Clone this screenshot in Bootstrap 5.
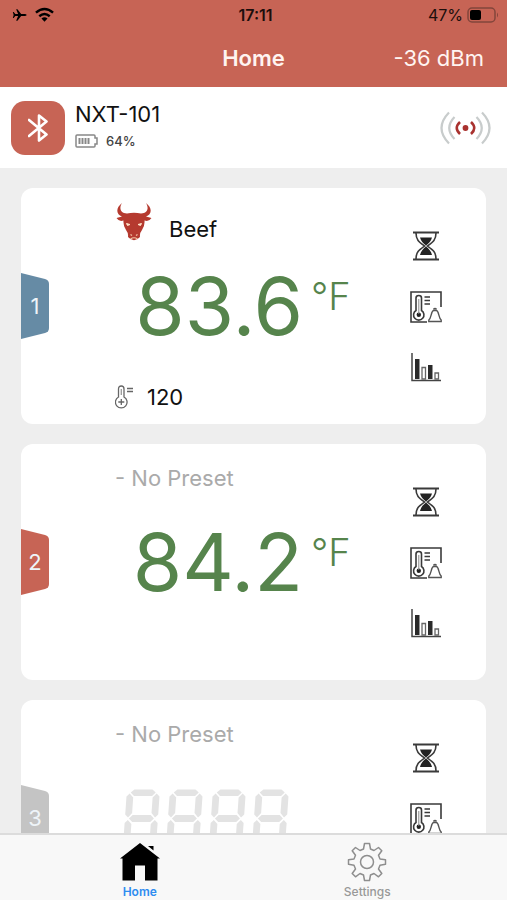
<!DOCTYPE html>
<html lang="en">
<head>
<meta charset="utf-8">
<meta name="viewport" content="width=device-width, initial-scale=1">
<title>Home</title>
<link href="https://cdn.jsdelivr.net/npm/bootstrap@5.3.0/dist/css/bootstrap.min.css" rel="stylesheet">
<style>
  :root { --brick: #c76455; --steel: #668ba5; --leaf: #56844c; }
  body { font-family: Inter, "Liberation Sans", sans-serif; color: #111; background: #eee; }
  svg { display: block; flex: none; }
  .top-area { background: var(--brick); }
  .status-line { height: 30px; font-size: 16px; line-height: 30px; color: #1c0e0c; }
  .title-line { height: 57px; padding: 0 23px; font-size: 22px; line-height: 56px; color: #fff4f1; }
  .title-line h1 { font-size: 22px; line-height: 56px; }
  .device-line { height: 81px; padding: 0 16px 0 11px; }
  .bt-tile { width: 54px; height: 54px; border-radius: 14px; background: var(--brick); }
  .device-text { padding: 0 0 2px 10px; }
  .device-name { font-size: 22px; line-height: 28px; }
  .device-level { font-size: 13px; line-height: 26px; font-weight: 500; color: #444; }
  .probe-scroll { scrollbar-width: none; padding: 20px 21px; min-height: 0; }
  .probe-scroll::-webkit-scrollbar { display: none; }
  .probe-list { gap: 20px; }
  .probe { height: 236px; border-radius: 12px; overflow: hidden; }
  .probe-tag { width: 28px; height: 66px; font-size: 22px; line-height: 66px; color: #eef4f8; clip-path: path("M0 0L24 6Q28 7 28 11V55Q28 59 24 60L0 66Z"); }
  .tag-steel { background: var(--steel); }
  .tag-brick { background: var(--brick); }
  .tag-grey { background: #c4c4c4; }
  .probe-body { padding: 12px 0 11px 66px; }
  .preset-line { height: 44px; gap: 16px; font-size: 22px; line-height: 28px; }
  .preset-line h2 { font-size: 22px; line-height: 30px; }
  .no-preset { color: #aaa; }
  .reading { margin-top: 22px; gap: 8px; color: var(--leaf); }
  .reading-value { font-size: 80px; line-height: 80px; width: 188px; }
  .reading-unit { font-size: 38px; line-height: 60px; font-weight: 300; }
  .reading-blank { margin-top: 33px; gap: 5px; padding-left: 8px; }
  .target-line { height: 32px; gap: 14px; font-size: 22px; }
  .probe-tools { width: 120px; gap: 30px; }
  .tab-line { height: 67px; background: #f8f8f8; border-top: 2px solid #dcdcdc; padding: 0 26px; }
  .tab-line a { gap: 2px; font-size: 12px; line-height: 16px; font-weight: 500; color: #999; padding-top: 7px; }
  .tab-line a.active { color: #2f8cf0; font-weight: 600; }
</style>
</head>
<body>
<svg width="0" height="0" class="position-absolute" aria-hidden="true">
  <defs>
    <symbol id="hourglass" viewBox="0 0 26 30">
      <g fill="none" stroke="#3a3a3a" stroke-width="1.6"><path d="M0 1.500H26M0 28.500H26" stroke-width="2"/><path d="M3 2C3 9 6 11 11.500 15C6 19 3 21 3 28M23 2C23 9 20 11 14.500 15C20 19 23 21 23 28"/></g>
      <path d="M7 6.500H19C18 10 16 12 13 14.500C10 12 8 10 7 6.500ZM13 15.500C16 18 18 20 19 24H7C8 20 10 18 13 15.500Z" fill="#222"/>
    </symbol>
    <symbol id="thermo-alarm" viewBox="0 0 32 32">
      <g fill="none" stroke="#3a3a3a" stroke-width="1.6"><path d="M31 16V1H1V31H17"/><path d="M6 19.500V7Q6 4.500 8.800 4.500Q11.500 4.500 11.500 7V19.500A5.200 5.200 0 1 1 6 19.500Z"/><path d="M14.500 6H20M14.500 9.500H20M14.500 13H20"/><path d="M18.800 30.500V29C21.500 27 21 20 23.500 19.500H26.500C29 20 28.500 27 31.200 29V30.500Z" stroke="#555" stroke-width="1.400"/><path d="M23.500 18.500Q25 16.500 26.500 18.500" stroke="#555" stroke-width="1.600"/></g>
      <circle cx="8.800" cy="23.800" r="2.200" fill="#222"/><path d="M8.800 8V23" stroke="#888"/>
    </symbol>
    <symbol id="bars" viewBox="0 0 31 29">
      <path d="M1 0V27.500H30" fill="none" stroke="#444" stroke-width="1.500"/>
      <path d="M4 6H8.500V26H4ZM17 12H21.500V26H17Z" fill="#2a2a2a"/>
      <path d="M11 14.500H14.500V26H11ZM24 20H27.500V26H24Z" fill="none" stroke="#666" stroke-width="1.300"/>
    </symbol>
    <symbol id="lcd-digit" viewBox="0 0 38 60">
      <g fill="#e3e3e3" transform="translate(4 0) skewX(-4)">
        <path d="M4 3.500L7.500 0.500H25.500L29 3.500L25.500 7H7.500ZM4 29.500L7.500 26H25.500L29 29.500L25.500 33H7.500ZM4 55.500L7.500 52H25.500L29 55.500L25.500 59H7.500Z"/>
        <path d="M3 4.500L6.800 8.500V24L3 28.500L0 25.500V7.500ZM30 4.500L33 7.500V25.500L30 28.500L26.200 24V8.500ZM3 31L6.800 35V50L3 54.500L0 51V34ZM30 31L33 34V51L30 54.500L26.200 50V35Z"/>
      </g>
    </symbol>
  </defs>
</svg>

<div class="d-flex flex-column vh-100">
  <header class="top-area flex-shrink-0">
    <div class="status-line d-flex px-2">
      <div class="col d-flex align-items-center gap-2 ps-1">
        <svg width="15" height="16" viewBox="0 0 18 16"><path d="M17.500 8C17.500 7 16 6.700 14.500 6.700H11L6.500 1H5L7.300 6.700H4L2 4.500H1L2 8L1 11.500H2L4 9.300H7.300L5 15H6.500L11 9.300H14.500C16 9.300 17.500 9 17.500 8Z"/></svg>
        <svg width="19" height="16" viewBox="0 0 20 16"><g fill="none" stroke="#000" stroke-width="2.600"><path d="M1 5.500Q10-2 19 5.500"/><path d="M4.500 9.300Q10 4.700 15.500 9.300"/></g><path d="M10 15L6.800 11.800Q10 9 13.200 11.800Z"/></svg>
      </div>
      <div class="fw-semibold">17:11</div>
      <div class="col d-flex align-items-center justify-content-end gap-1">
        <span>47%</span>
        <svg width="32" height="16" viewBox="0 0 32 16"><rect x="1" y="1" width="27" height="14" rx="4" fill="none" stroke="#83453b" stroke-width="1.500"/><rect x="3" y="3" width="11" height="10" rx="2"/><path d="M30 5.500Q32 8 30 10.500Z" fill="#83453b"/></svg>
      </div>
    </div>
    <div class="title-line d-flex">
      <div class="col"></div>
      <h1 class="m-0 fw-semibold">Home</h1>
      <div class="col text-end">-36 dBm</div>
    </div>
  </header>

  <section class="device-line bg-white d-flex align-items-center flex-shrink-0">
    <div class="bt-tile d-flex align-items-center justify-content-center">
      <svg width="20" height="28" viewBox="0 0 20 28"><path d="M1 6L18.500 20.500L11 26.500V1.500L18.500 7.500L1 22" fill="none" stroke="#fff" stroke-width="2.600" stroke-linejoin="round" stroke-linecap="round"/></svg>
    </div>
    <div class="device-text flex-grow-1">
      <div class="device-name">NXT-101</div>
      <div class="device-level d-flex align-items-center gap-2">
        <svg width="23" height="14" viewBox="0 0 23 14"><path d="M2 1H19Q20 1 20 2V4H22V10H20V12Q20 13 19 13H2Q1 13 1 12V2Q1 1 2 1Z" fill="none" stroke="#888" stroke-width="1.500"/><path d="M4.500 4V10M7.500 4V10M10.500 4V10M13.500 4V10" stroke="#888" stroke-width="2"/></svg>
        <span>64%</span>
      </div>
    </div>
    <svg width="51" height="34" viewBox="0 0 51 34"><g fill="none" stroke="#c8cccc" stroke-width="2.200"><path d="M9 1.500Q-6 17 9 32.500M42 1.500Q57 17 42 32.500"/><path d="M14.500 6Q4 17 14.500 28M36.500 6Q47 17 36.500 28"/></g><path d="M20 11Q13.500 17 20 23M31 11Q37.500 17 31 23" fill="none" stroke="#a9322f" stroke-width="2.600"/><circle cx="25.500" cy="17" r="2.900" fill="#a9322f"/></svg>
  </section>

  <main class="probe-scroll flex-grow-1 overflow-auto">
    <div class="probe-list d-flex flex-column">
      <article class="probe bg-white d-flex flex-shrink-0">
        <div class="probe-tag tag-steel align-self-center text-center">1</div>
        <div class="probe-body flex-grow-1 d-flex flex-column">
          <div class="preset-line d-flex align-items-end">
            <svg class="align-self-center" width="38" height="38" viewBox="0 0 36 38"><path d="M6 0C3 5 4 10 11 10.500Q18 9 25 10.500C32 10 33 5 30 0C36.500 5 36 11.500 30 13.500L35.500 15Q33 19 28.500 17.500Q29 23 26 27Q23.500 30 24 34Q18 40.500 12 34Q12.500 30 10 27Q7 23 7.500 17.500Q3 19 .5 15L6 13.500C0 11.500-.5 5 6 0Z" fill="#b53a2f"/><path d="M10.500 20.500L14 21.500L11.500 22.500ZM25.500 20.500L22 21.500L24.500 22.500Z" fill="#ffe3c8" stroke="#ffe3c8"/><path d="M14.500 31.500L16 32.500M21.500 31.500L20 32.500M14.500 36Q18 33.500 21.500 36" fill="none" stroke="#f2c6a5" stroke-width="1.200"/></svg>
            <h2 class="m-0 fw-normal">Beef</h2>
          </div>
          <div class="reading d-flex">
            <div class="reading-value text-end">83.6</div>
            <div class="reading-unit">°F</div>
          </div>
          <div class="target-line d-flex align-items-center mt-auto">
            <svg width="18" height="24" viewBox="0 0 18 24"><g fill="none" stroke="#666" stroke-width="1.300"><path d="M3.500 12V4Q3.500 1 6.300 1Q9 1 9 4V12A5.800 5.800 0 1 1 3.500 12Z"/><path d="M12 3.500H18M12 6.500H18M6.300 14V20M3.300 17H9.300"/><path d="M6.300 4V10" stroke="#999"/></g></svg>
            <span>120</span>
          </div>
        </div>
        <div class="probe-tools d-flex flex-column align-items-center justify-content-center">
          <svg width="26" height="30"><use href="#hourglass"/></svg>
          <svg width="32" height="32"><use href="#thermo-alarm"/></svg>
          <svg width="31" height="29"><use href="#bars"/></svg>
        </div>
      </article>

      <article class="probe bg-white d-flex flex-shrink-0">
        <div class="probe-tag tag-brick align-self-center text-center">2</div>
        <div class="probe-body flex-grow-1 d-flex flex-column">
          <div class="preset-line d-flex align-items-center">
            <h2 class="no-preset m-0 fw-normal">- No Preset</h2>
          </div>
          <div class="reading d-flex">
            <div class="reading-value text-end">84.2</div>
            <div class="reading-unit">°F</div>
          </div>
        </div>
        <div class="probe-tools d-flex flex-column align-items-center justify-content-center">
          <svg width="26" height="30"><use href="#hourglass"/></svg>
          <svg width="32" height="32"><use href="#thermo-alarm"/></svg>
          <svg width="31" height="29"><use href="#bars"/></svg>
        </div>
      </article>

      <article class="probe bg-white d-flex flex-shrink-0">
        <div class="probe-tag tag-grey align-self-center text-center">3</div>
        <div class="probe-body flex-grow-1 d-flex flex-column">
          <div class="preset-line d-flex align-items-center">
            <h2 class="no-preset m-0 fw-normal">- No Preset</h2>
          </div>
          <div class="reading-blank d-flex">
            <svg width="38" height="60"><use href="#lcd-digit"/></svg>
            <svg width="38" height="60"><use href="#lcd-digit"/></svg>
            <svg width="38" height="60"><use href="#lcd-digit"/></svg>
            <svg width="38" height="60"><use href="#lcd-digit"/></svg>
          </div>
        </div>
        <div class="probe-tools d-flex flex-column align-items-center justify-content-center">
          <svg width="26" height="30"><use href="#hourglass"/></svg>
          <svg width="32" height="32"><use href="#thermo-alarm"/></svg>
          <svg width="31" height="29"><use href="#bars"/></svg>
        </div>
      </article>
    </div>
  </main>

  <nav class="tab-line d-flex flex-shrink-0">
    <a href="#" class="active col d-flex flex-column align-items-center text-decoration-none">
      <svg width="40" height="40" viewBox="0 0 40 40"><path d="M20 1L40 16.500H37.500V38.500H25V23.500H15V38.500H2.500V16.500H0ZM28 4H33.500V8.500Z"/></svg>
      Home
    </a>
    <a href="#" class="col d-flex flex-column align-items-center text-decoration-none">
      <svg width="40" height="40" viewBox="0 0 40 40"><path d="M17.500 1.500H22.500L23.500 7L27 8.500L31.500 5.500L34.800 8.800L31.500 13.300L33 17L38.500 17.700V22.300L33 23.300L31.500 27L34.800 31.500L31.500 34.800L27 31.500L23.500 33L22.500 38.500H17.500L16.500 33L13 31.500L8.500 34.800L5.200 31.500L8.500 27L7 23.300L1.500 22.300V17.700L7 17L8.500 13.300L5.200 8.800L8.500 5.500L13 8.500L16.500 7ZM26.500 20A6.500 6.500 0 1 0 13.500 20A6.500 6.500 0 1 0 26.500 20Z" fill="none" stroke="#8e8e8e" stroke-width="1.500" stroke-linejoin="round"/></svg>
      Settings
    </a>
  </nav>
</div>
<script src="https://cdn.jsdelivr.net/npm/bootstrap@5.3.0/dist/js/bootstrap.bundle.min.js"></script>
</body>
</html>
